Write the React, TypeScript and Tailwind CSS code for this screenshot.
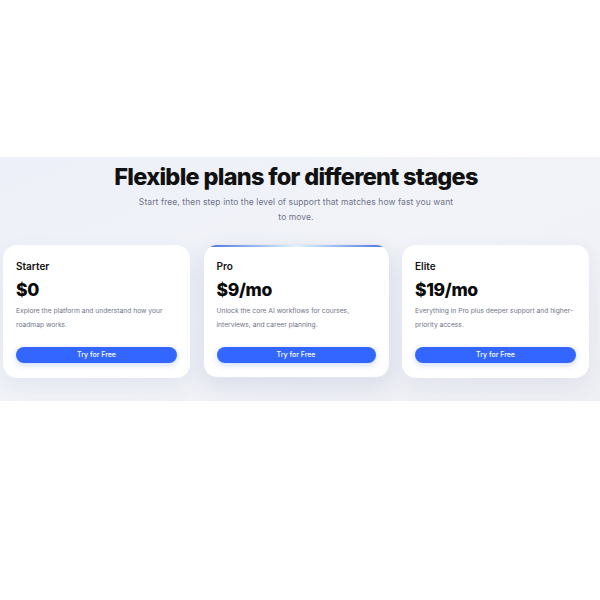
const PLANS = [
  {
    id: "starter",
    name: "Starter",
    price: "$0",
    blurb: "Explore the platform and understand how your roadmap works.",
    featured: false,
  },
  {
    id: "pro",
    name: "Pro",
    price: "$9/mo",
    blurb: "Unlock the core AI workflows for courses, interviews, and career planning.",
    featured: true,
  },
  {
    id: "elite",
    name: "Elite",
    price: "$19/mo",
    blurb: "Everything in Pro plus deeper support and higher-priority access.",
    featured: false,
  },
];

export default function App() {
  return (
    <div className="h-[600px] w-[600px] bg-white font-['Inter',sans-serif]">
      <div className="h-[157px]" />
      <section className="h-[244px] bg-gradient-to-br from-[#edf0f8] via-[#f1f3f8] to-[#eeeff4] pl-[3px] pr-[11px] pt-[5px]">
        <h2 className="text-center text-[23.5px] font-extrabold leading-[30px] tracking-[-0.03em] text-[#111111]">
          Flexible plans for different stages
        </h2>
        <p className="mx-auto mt-[3px] w-[318px] text-center text-[8.5px] leading-[15px] tracking-[0.01em] text-[#6f7488]">
          Start free, then step into the level of support that matches how fast you want to move.
        </p>

        <div className="mt-[20px] grid grid-cols-[187px_187px_187px] gap-[12.5px]">
          {PLANS.map((plan) => (
            <article
              key={plan.id}
              className={
                plan.featured
                  ? "relative -mt-px overflow-hidden rounded-[14px] border border-[#e3e7f0] bg-white px-[13px] pb-[14px] pt-[14px] shadow-[0_8px_22px_rgba(60,80,140,0.13)]"
                  : "relative overflow-hidden rounded-[14px] bg-white px-[13px] pb-[14px] pt-[14px] shadow-[0_8px_22px_rgba(60,80,140,0.08)]"
              }
            >
              {plan.featured && (
                <div className="absolute inset-x-0 top-0 h-[2px] bg-gradient-to-r from-[#4a6fd8] via-[#dff3ff] to-[#4a6fd8]" />
              )}
              <h3 className="text-[10px] font-semibold leading-[14px] text-[#111111]">{plan.name}</h3>
              <div className="mt-[5px] text-[17.5px] font-extrabold leading-[24px] tracking-[-0.02em] text-[#0b0b0b]">
                {plan.price}
              </div>
              <p className="mt-[2px] text-[6.7px] leading-[14px] text-[#6f7488]">{plan.blurb}</p>
              <button className="mt-[15px] h-[16px] w-full rounded-full bg-[#3366ff] text-[7px] font-medium text-white shadow-[0_2px_6px_rgba(51,102,255,0.25)]">
                Try for Free
              </button>
            </article>
          ))}
        </div>
      </section>
    </div>
  );
}
